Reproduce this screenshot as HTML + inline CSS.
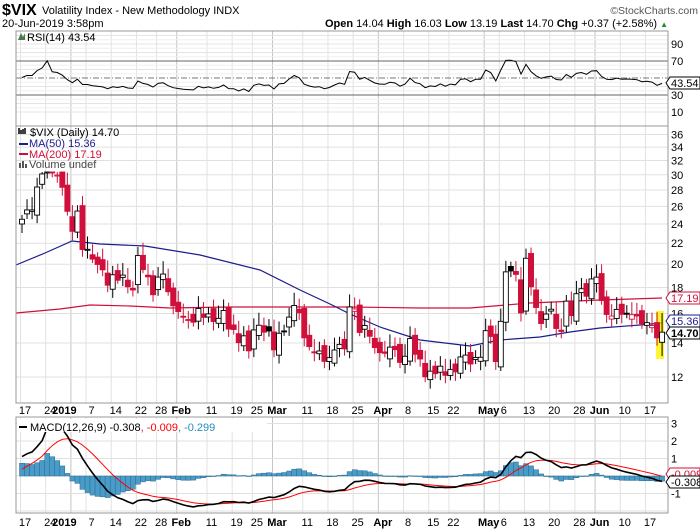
<!DOCTYPE html>
<html><head><meta charset="utf-8"><style>
body{margin:0;background:#fff;width:700px;height:530px;overflow:hidden;font-family:"Liberation Sans",sans-serif}
svg{display:block}
</style></head><body>
<svg id="c" width="700" height="530" xmlns="http://www.w3.org/2000/svg" font-family="Liberation Sans, sans-serif">
<text x="2" y="15" font-size="16" font-weight="bold" fill="#000">$VIX</text>
<text x="42" y="14" font-size="11" fill="#000">Volatility Index - New Methodology  INDX</text>
<text x="698" y="14" font-size="10.5" fill="#555" text-anchor="end">©StockCharts.com</text>
<text x="2" y="27" font-size="11" fill="#000">20-Jun-2019 3:58pm</text>
<text x="668" y="27" font-size="11" fill="#000" text-anchor="end"><tspan font-weight="bold">Open</tspan> 14.04 <tspan font-weight="bold">High</tspan> 16.03 <tspan font-weight="bold">Low</tspan> 13.19 <tspan font-weight="bold">Last</tspan> 14.70 <tspan font-weight="bold">Chg</tspan> +0.37 (+2.58%) <tspan fill="#2a8a2a" font-size="8">▲</tspan></text>
<g id="g"></g>
</svg>
<script>
var C=[24.52,25.58,25.58,28.38,30.11,36.07,30.41,29.96,28.34,25.42,
23.22,25.45,21.38,21.40,20.47,19.98,19.50,18.19,19.07,18.60,19.04,18.06,17.80,20.80,19.52,18.89,17.42,18.87,19.13,17.66,16.57,
16.14,15.73,15.57,15.38,16.37,15.72,15.97,15.43,15.65,16.22,14.91,14.88,14.02,14.46,13.51,14.85,15.17,14.70,14.78,
13.57,14.63,14.74,15.74,16.59,16.05,14.33,13.77,13.41,13.50,12.88,13.10,13.56,13.91,13.63,16.48,16.33,14.68,15.15,14.43,13.71,
13.40,13.36,13.74,13.58,12.82,13.18,14.28,13.30,13.02,12.01,12.32,12.18,12.60,12.09,12.42,12.28,13.14,13.25,12.73,13.11,13.12,
14.80,14.42,12.87,15.44,19.32,19.40,19.10,16.04,20.55,18.06,16.44,15.29,15.96,16.31,14.95,14.75,16.92,15.85,17.50,17.90,17.30,18.71,
18.86,16.97,15.93,15.82,16.30,15.94,15.99,15.91,15.82,15.28,15.35,15.15,14.33,14.70];
var s='';
function X(i){return 22+i*5.04}
function PY(p){return 925.4-220.7*Math.log(p)}
function RY(v){return 120.5-0.85*v}
function MY(v){return 476-17.5*v}
var L=16,R=668;
function hl(y,c,w,d){s+='<line x1="'+L+'" x2="'+R+'" y1="'+y+'" y2="'+y+'" stroke="'+c+'" stroke-width="'+(w||1)+'"'+(d?' stroke-dasharray="'+d+'"':'')+'/>';}
var wk=[[0,'17'],[5,'24'],[10,'2019',1],[13,'7'],[18,'14'],[23,'22'],[27,'28'],[31,'Feb',1],[37,'11'],[42,'19'],[46,'25'],[50,'Mar',1],[56,'11'],[61,'18'],[66,'25'],[71,'Apr',1],[76,'8'],[81,'15'],[85,'22'],[92,'May',1],[95,'6'],[100,'13'],[105,'20'],[110,'28'],[114,'Jun',1],[119,'10'],[124,'17']];
function vgrid(t,b){wk.forEach(function(w){var x=X(w[0])-1.5;s+='<line x1="'+x+'" x2="'+x+'" y1="'+t+'" y2="'+b+'" stroke="'+(w[2]?'#c4c4c4':'#e2e2e2')+'"/>';});}
vgrid(31,126);
for(var v=10;v<=100;v+=10){if(v!=30&&v!=50&&v!=70)hl(RY(v),'#e4e4e4');}
for(var v=15;v<=95;v+=10){hl(RY(v),'#f0f0f0');}
hl(RY(70),'#666');hl(RY(30),'#666');hl(RY(50),'#777',1,'6,2,1,2');
vgrid(126,403);
var pl=[36,34,32,30,28,26,24,22,20,18,16,14,12];
pl.forEach(function(p){hl(PY(p),'#e0e0e0');});
vgrid(417,513);
[3,2,1,0,-1,-2].forEach(function(v){hl(MY(v),'#e0e0e0');});
var ag=0.9,al=0.9,rsi=[];
for(var i=0;i<C.length;i++){var d=i?C[i]-C[i-1]:0.3;var g=d>0?d:0,l=d<0?-d:0;ag=(ag*13+g)/14;al=(al*13+l)/14;rsi.push(100-100/(1+ag/al));}
var pts=rsi.map(function(r,i){return X(i).toFixed(1)+','+RY(r).toFixed(1)}).join(' ');
s+='<polyline points="'+pts+'" fill="none" stroke="#000" stroke-width="1"/>';
s+='<text x="27" y="41" font-size="11">RSI(14) 43.54</text><path d="M18,40 L21,33 L23,37 L25,33 L25,40Z" fill="#4a7a4a"/>';
var MA200=[[16,313],[60,309],[90,305],[130,306],[170,308],[230,307],[300,307],[350,307],[420,308],[470,308],[530,303],[600,300],[662,298]];
var MA50=[[16,265],[45,253],[72,241],[100,244],[145,246],[200,255],[260,270],[300,290],[330,304],[350,314],[380,327],[420,340],[470,346],[500,340],[540,337],[570,332],[600,328],[640,325],[662,323]];
function pl2(a,c){return '<polyline points="'+a.map(function(p){return p.join(',')}).join(' ')+'" fill="none" stroke="'+c+'" stroke-width="1.2"/>';}
s+=pl2(MA200,'#d0103a');s+=pl2(MA50,'#1c1c8c');
s+='<rect x="656" y="311" width="8" height="48" fill="#fff200" opacity="0.8"/>';
for(var i=0;i<C.length;i++){
 var c=C[i],pc=i?C[i-1]:24.0,o=pc*(1+0.025*Math.sin(i*1.7));
 if(i==127)o=14.04;
 var hi=Math.max(o,c)*(1.02+0.04*Math.abs(Math.sin(i*2.3))),lo=Math.min(o,c)*(0.985-0.025*Math.abs(Math.cos(i*1.9)));
 if(i==127){hi=16.03;lo=13.19;}
 var x=X(i),col=c<pc?'#d0103a':'#000',fill=c>o?'#fff':(c<pc?'#d0103a':'#000');
 var yh=Math.max(PY(hi),172),yl=PY(lo),yt=Math.max(PY(Math.max(o,c)),172),yb=PY(Math.min(o,c));
 if(yb-yt<1)yb=yt+1;
 s+='<line x1="'+x+'" x2="'+x+'" y1="'+yh+'" y2="'+yl+'" stroke="'+col+'"/>';
 s+='<rect x="'+(x-2.5)+'" y="'+yt+'" width="5" height="'+(yb-yt)+'" fill="'+fill+'" stroke="'+col+'" stroke-width="0.9"/>';
}
s+='<text x="30" y="136" font-size="11">$VIX (Daily) 14.70</text><path d="M19,128v6M21,130v4M23,129v5M25,128v6" stroke="#000" stroke-width="1.5"/>';
s+='<line x1="19" x2="28" y1="144" y2="144" stroke="#1c1c8c" stroke-width="2"/><text x="29" y="147" font-size="11" fill="#1c1c8c">MA(50) 15.36</text>';
s+='<line x1="19" x2="28" y1="154" y2="154" stroke="#d0103a" stroke-width="2"/><text x="29" y="158" font-size="11" fill="#d0103a">MA(200) 17.19</text>';
s+='<path d="M19,168v-5h2v5M22,168v-7h2v7M25,168v-4h2v4" fill="#555"/><text x="29" y="168" font-size="11" fill="#444">Volume undef</text>';
var e12=22.2,e26=21.2,sg=0.2,md=[],sgl=[];
for(var i=0;i<C.length;i++){e12+= (C[i]-e12)*2/13;e26+=(C[i]-e26)*2/27;var m=e12-e26;sg+=(m-sg)*0.2;md.push(m);sgl.push(sg);}
for(var i=0;i<C.length;i++){var h=md[i]-sgl[i],y0=MY(0),y1=MY(h);s+='<rect x="'+(X(i)-2.5)+'" y="'+Math.min(y0,y1)+'" width="5" height="'+Math.max(0.5,Math.abs(y1-y0))+'" fill="#4a9cc8" stroke="#2a6a90" stroke-width="0.5"/>';}
function cl(v){return Math.max(418,Math.min(512,MY(v)))}
s+='<polyline points="'+sgl.map(function(v,i){return X(i).toFixed(1)+','+cl(v).toFixed(1)}).join(' ')+'" fill="none" stroke="#f00" stroke-width="1"/>';
s+='<polyline points="'+md.map(function(v,i){return X(i).toFixed(1)+','+cl(v).toFixed(1)}).join(' ')+'" fill="none" stroke="#000" stroke-width="1.6"/>';
s+='<rect x="17" y="419" width="250" height="13" fill="#fff"/><line x1="19" x2="27" y1="427" y2="427" stroke="#000" stroke-width="2"/><text x="30" y="431" font-size="11">MACD(12,26,9) -0.308<tspan fill="#f00">, -0.009</tspan><tspan fill="#2a8ac0">, -0.299</tspan></text>';
s+='<rect x="'+L+'" y="31" width="'+(R-L)+'" height="372" fill="none" stroke="#999"/>';
s+='<line x1="'+L+'" x2="'+R+'" y1="126" y2="126" stroke="#999"/>';
s+='<rect x="'+L+'" y="417" width="'+(R-L)+'" height="96" fill="none" stroke="#999"/>';
function rl(y,t){s+='<text x="671" y="'+(y+4)+'" font-size="11">'+t+'</text>';}
[90,70,50,30,10].forEach(function(v){if(v!=50)rl(RY(v),v);});
pl.forEach(function(p){rl(PY(p),p);});
[3,2,1].forEach(function(v){rl(MY(v),v);});rl(MY(-1),'-1');
function tag(y,t,c,b){s+='<path d="M666,'+y+' l4,-6 h30 v12 h-30z" fill="#fff" stroke="'+c+'"/><text x="671" y="'+(y+4)+'" font-size="11" fill="'+c+'"'+(b?' font-weight="bold"':'')+'>'+t+'</text>';}
tag(83,'43.54','#000');tag(298,'17.19','#d0103a');tag(321,'15.36','#1c1c8c');tag(333,'14.70','#000',1);
tag(474,'-0.009','#d0103a');tag(482,'-0.308','#000');
function dl(y){wk.forEach(function(w){var x=X(w[0]);if(w[1]=='2019'){s+='<text x="'+(x-8)+'" y="'+y+'" font-size="11" text-anchor="middle" font-weight="bold">2019</text>';}else s+='<text x="'+(w[1]=='7'?x+4:x+3)+'" y="'+y+'" font-size="11" text-anchor="middle"'+(w[2]?' font-weight="bold"':'')+'>'+w[1]+'</text>';});}
dl(414);dl(526);
document.getElementById('g').innerHTML=s;
</script>
</body></html>
